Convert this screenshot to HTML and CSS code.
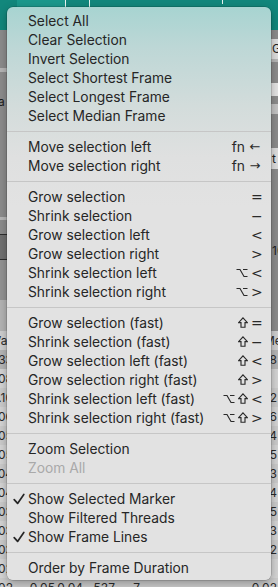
FILE: index.html
```html
<!DOCTYPE html>
<html lang="en">
<head>
<title>Frame menu</title>
<link rel="stylesheet" href="styles.css">
</head>
<body>
<div class="screen">
  <div class="titlebar">
    <div class="tab"></div>
    <div class="tick t1"></div>
    <div class="tick t2"></div>
    <div class="tick t3"></div>
  </div>

  <div class="workspace">
    <div class="strip">
      <div class="band gray" style="height:42px"></div>
      <div class="band light" style="height:4px"></div>
      <div class="band gray txt" style="height:132px"><span class="lbl-left">a</span></div>
      <div class="band light" style="height:4px"></div>
      <div class="band gray" style="height:15px"></div>
      <div class="band boxed" style="height:26px"></div>
      <div class="band mid" style="height:44px"></div>
      <div class="band pale" style="height:34px"></div>
    </div>
    <div class="strip right">
      <div class="band gray" style="height:10px"></div>
      <div class="band button" style="height:22px">G</div>
      <div class="band light" style="height:3px"></div>
      <div class="band gray" style="height:23px"></div>
      <div class="band field" style="height:15px"></div>
      <div class="band gray" style="height:9px"></div>
      <div class="band soft" style="height:10px"></div>
      <div class="band gray" style="height:38px"></div>
      <div class="band button" style="height:23px">t</div>
      <div class="band gray txt" style="height:152px"><span class="lbl-right">10</span></div>
    </div>
  </div>

  <div class="table">
    <div class="trow head"><span>Var</span><span></span><span></span><span></span><span></span><span>Me</span></div>
    <div class="trow sel"><span>0.33</span><span></span><span></span><span></span><span></span><span>0.78</span></div>
    <div class="trow"><span>0.08</span><span></span><span></span><span></span><span></span><span></span></div>
    <div class="trow alt"><span>0.10</span><span></span><span></span><span></span><span></span><span>0.02</span></div>
    <div class="trow"><span>0.06</span><span></span><span></span><span></span><span></span><span>0.06</span></div>
    <div class="trow alt"><span>0.05</span><span></span><span></span><span></span><span></span><span>0.04</span></div>
    <div class="trow"><span>0.05</span><span></span><span></span><span></span><span></span><span>0.05</span></div>
    <div class="trow alt"><span>0.04</span><span></span><span></span><span></span><span></span><span>0.03</span></div>
    <div class="trow"><span>0.04</span><span></span><span></span><span></span><span></span><span>0.04</span></div>
    <div class="trow alt"><span>0.03</span><span></span><span></span><span></span><span></span><span>0.05</span></div>
    <div class="trow"><span>0.03</span><span></span><span></span><span></span><span></span><span>0.03</span></div>
    <div class="trow alt"><span>0.03</span><span></span><span></span><span></span><span></span><span>0.02</span></div>
    <div class="trow"><span>0.02</span><span></span><span></span><span></span><span></span><span></span></div>
    <div class="trow alt"><span>0.02</span><span>0.05</span><span>0.04</span><span>537</span><span>7</span><span>0.02</span></div>
  </div>

  <div class="menu">
    <div class="item"><span class="mark"></span><span class="label">Select All</span></div>
    <div class="item"><span class="mark"></span><span class="label">Clear Selection</span></div>
    <div class="item"><span class="mark"></span><span class="label">Invert Selection</span></div>
    <div class="item"><span class="mark"></span><span class="label">Select Shortest Frame</span></div>
    <div class="item"><span class="mark"></span><span class="label">Select Longest Frame</span></div>
    <div class="item"><span class="mark"></span><span class="label">Select Median Frame</span></div>
    <div class="sep"></div>
    <div class="item"><span class="mark"></span><span class="label">Move selection left</span><span class="keys"><span class="fn">fn</span><span class="key arrow">&#8592;</span></span></div>
    <div class="item"><span class="mark"></span><span class="label">Move selection right</span><span class="keys"><span class="fn">fn</span><span class="key arrow">&#8594;</span></span></div>
    <div class="sep"></div>
    <div class="item"><span class="mark"></span><span class="label">Grow selection</span><span class="keys"><span class="key">=</span></span></div>
    <div class="item"><span class="mark"></span><span class="label">Shrink selection</span><span class="keys"><span class="key">&#8722;</span></span></div>
    <div class="item"><span class="mark"></span><span class="label">Grow selection left</span><span class="keys"><span class="key">&lt;</span></span></div>
    <div class="item"><span class="mark"></span><span class="label">Grow selection right</span><span class="keys"><span class="key">&gt;</span></span></div>
    <div class="item"><span class="mark"></span><span class="label">Shrink selection left</span><span class="keys">
      <svg class="mod opt" viewBox="0 0 12 10"><path d="M0.5 1.5H4L8 8.5H11.5M7 1.5H11.5"/></svg><span class="key">&lt;</span></span></div>
    <div class="item"><span class="mark"></span><span class="label">Shrink selection right</span><span class="keys">
      <svg class="mod opt" viewBox="0 0 12 10"><path d="M0.5 1.5H4L8 8.5H11.5M7 1.5H11.5"/></svg><span class="key">&gt;</span></span></div>
    <div class="sep"></div>
    <div class="item"><span class="mark"></span><span class="label">Grow selection (fast)</span><span class="keys">
      <svg class="mod shift" viewBox="0 0 10 11"><path d="M5 0.8L9.4 5.6H7V10.2H3V5.6H0.6Z"/></svg><span class="key">=</span></span></div>
    <div class="item"><span class="mark"></span><span class="label">Shrink selection (fast)</span><span class="keys">
      <svg class="mod shift" viewBox="0 0 10 11"><path d="M5 0.8L9.4 5.6H7V10.2H3V5.6H0.6Z"/></svg><span class="key">&#8722;</span></span></div>
    <div class="item"><span class="mark"></span><span class="label">Grow selection left (fast)</span><span class="keys">
      <svg class="mod shift" viewBox="0 0 10 11"><path d="M5 0.8L9.4 5.6H7V10.2H3V5.6H0.6Z"/></svg><span class="key">&lt;</span></span></div>
    <div class="item"><span class="mark"></span><span class="label">Grow selection right (fast)</span><span class="keys">
      <svg class="mod shift" viewBox="0 0 10 11"><path d="M5 0.8L9.4 5.6H7V10.2H3V5.6H0.6Z"/></svg><span class="key">&gt;</span></span></div>
    <div class="item"><span class="mark"></span><span class="label">Shrink selection left (fast)</span><span class="keys">
      <svg class="mod opt" viewBox="0 0 12 10"><path d="M0.5 1.5H4L8 8.5H11.5M7 1.5H11.5"/></svg>
      <svg class="mod shift" viewBox="0 0 10 11"><path d="M5 0.8L9.4 5.6H7V10.2H3V5.6H0.6Z"/></svg><span class="key">&lt;</span></span></div>
    <div class="item"><span class="mark"></span><span class="label">Shrink selection right (fast)</span><span class="keys">
      <svg class="mod opt" viewBox="0 0 12 10"><path d="M0.5 1.5H4L8 8.5H11.5M7 1.5H11.5"/></svg>
      <svg class="mod shift" viewBox="0 0 10 11"><path d="M5 0.8L9.4 5.6H7V10.2H3V5.6H0.6Z"/></svg><span class="key">&gt;</span></span></div>
    <div class="sep"></div>
    <div class="item"><span class="mark"></span><span class="label">Zoom Selection</span></div>
    <div class="item disabled"><span class="mark"></span><span class="label">Zoom All</span></div>
    <div class="sep"></div>
    <div class="item"><span class="mark"><svg class="check" viewBox="0 0 12 12"><path d="M1.2 6.6L4.6 10.4L10.8 1.4"/></svg></span><span class="label">Show Selected Marker</span></div>
    <div class="item"><span class="mark"></span><span class="label">Show Filtered Threads</span></div>
    <div class="item"><span class="mark"><svg class="check" viewBox="0 0 12 12"><path d="M1.2 6.6L4.6 10.4L10.8 1.4"/></svg></span><span class="label">Show Frame Lines</span></div>
    <div class="sep"></div>
    <div class="item"><span class="mark"></span><span class="label">Order by Frame Duration</span></div>
  </div>
</div>
</body>
</html>
```

FILE: styles.css
```css
html, body {
    margin: 0;
    padding: 0;
    overflow: hidden;
}

body {
    width: 278px;
    height: 587px;
    font-family: Inter, "Noto Sans", "DejaVu Sans", sans-serif;
    color: #262626;
}

.screen {
    position: relative;
    width: 278px;
    height: 587px;
    overflow: hidden;
    background: #8e8e8e;
}

/* title bar behind the menu */
.titlebar {
    height: 30px;
    background: #12877c;
    display: flex;
}

.tab {
    width: 48px;
    margin-left: 17px;
    background: #1a988c;
}

.tick {
    width: 1px;
    background: #e8f4f2;
}

.t1 { height: 8px; }
.t2 { height: 8px; margin-left: 23px; }
.t3 { height: 4px; margin-left: 132px; }

/* side strips peeking out left and right of the menu */
.workspace {
    height: 301px;
    display: flex;
    justify-content: space-between;
}

.strip {
    width: 12px;
    display: flex;
    flex-direction: column;
}

.band {
    font-size: 12px;
    line-height: 1;
    overflow: hidden;
}

.gray { background: #8c8c8c; }
.light { background: #b7b7b7; }
.mid { background: #939393; }
.pale { background: #b4b4b4; }
.soft { background: #c4c4c4; }
.field { background: #e4e4e4; }

.boxed {
    background: #717171;
    border-top: 1px solid #2e2e2e;
    border-bottom: 1px solid #2e2e2e;
}

.button {
    background: #dedede;
    display: flex;
    align-items: center;
    padding-left: 6px;
    color: #222;
}

.txt {
    padding-top: 24px;
}

.lbl-left {
    display: block;
    margin-left: -2px;
    color: #1d1d1d;
}

.lbl-right {
    display: block;
    padding-top: 52px;
    padding-left: 6px;
    color: #1d1d1d;
}

/* table at the bottom */
.table {
    background: #d2d2d2;
}

.trow {
    height: 19px;
    display: grid;
    grid-template-columns: 13px 42px 28px 32px 25px 1fr;
    align-items: center;
    font-size: 12px;
    color: #2a2a2a;
    background: #d4d4d4;
}

.trow span {
    display: flex;
    justify-content: flex-end;
    white-space: nowrap;
    min-width: 0;
}

.trow.alt { background: #cbcbcb; }
.trow.sel { background: #b6b6b6; }

.trow.head {
    background: #cfcfcf;
}

.trow.head span {
    justify-content: flex-start;
}

.trow.head span:first-child {
    margin-left: -7px;
}

.trow.head span:last-child {
    padding-left: 124px;
}

.trow span:last-child {
    padding-right: 1px;
}

/* the context menu */
.menu {
    position: absolute;
    top: 7px;
    left: 7px;
    width: 264px;
    padding: 4px 0 3px;
    box-sizing: border-box;
    border-radius: 6px;
    background: linear-gradient(#a7d4d1 0px, #bdd7d6 40px, #d3dcdb 100px, #dfe0e0 150px, #e2e2e2 200px);
    box-shadow: 0 0 0 0.5px rgba(0, 0, 0, 0.25), 0 3px 10px rgba(0, 0, 0, 0.3);
    font-size: 13.8px;
}

.item {
    height: 19px;
    display: flex;
    align-items: center;
    padding-right: 10px;
    white-space: nowrap;
}

.mark {
    width: 21px;
    height: 19px;
    padding-left: 6px;
    box-sizing: border-box;
    display: flex;
    align-items: center;
}

.check {
    width: 12px;
    height: 12px;
    fill: none;
    stroke: #262626;
    stroke-width: 1.7;
    stroke-linecap: round;
    stroke-linejoin: round;
}

.label {
    flex: 1;
}

.disabled {
    color: #a9a9a9;
}

.keys {
    display: flex;
    align-items: center;
    gap: 3px;
    font-family: "DejaVu Sans", sans-serif;
    font-size: 14px;
    color: #2a2a2a;
}

.mod {
    fill: none;
    stroke: #2a2a2a;
    stroke-width: 1.15;
}

.opt {
    width: 12px;
    height: 10px;
}

.shift {
    width: 10px;
    height: 11px;
}

.fn {
    margin-right: 1px;
    font-family: Inter, sans-serif;
    font-size: 13.8px;
}

.key {
    width: 10px;
    text-align: center;
}

.key.arrow {
    width: 12px;
    font-size: 13px;
}

.sep {
    height: 12px;
    display: flex;
    align-items: center;
}

.sep::after {
    content: "";
    flex: 1;
    height: 1px;
    background: #c6c6c6;
}
```
